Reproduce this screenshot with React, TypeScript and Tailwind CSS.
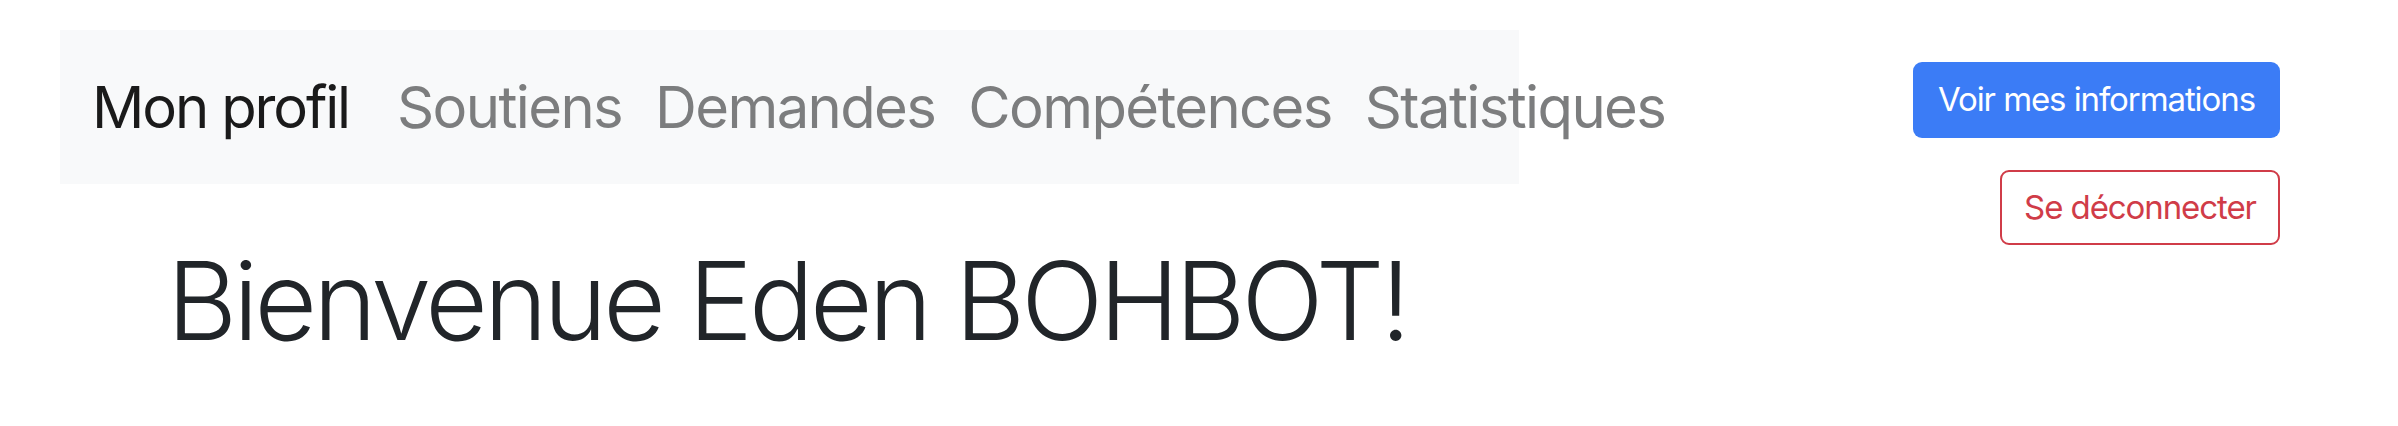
const links = ['Soutiens', 'Demandes', 'Compétences', 'Statistiques'];

export default function App() {
  return (
    <div className="flex w-[2398px] h-[426px] bg-white font-['Inter','Liberation_Sans',sans-serif] overflow-hidden">
      <div className="flex flex-col">
        <nav className="ml-[60px] mt-[30px] w-[1459px] h-[154px] bg-[#f8f9fa] flex items-center pl-[32px] whitespace-nowrap">
          <a className="text-[58px] leading-none tracking-[-0.037em] text-[#1a1a1a] mr-[48px]">Mon profil</a>
          <div className="flex gap-[33px]">
            {links.map((l) => (
              <a key={l} className="text-[58px] leading-none tracking-[-0.028em] text-[#7c7d7e]">
                {l}
              </a>
            ))}
          </div>
        </nav>
        <h1 className="ml-[167px] mt-[63px] text-[108px] leading-none font-light tracking-[-0.036em] text-[#212529] whitespace-nowrap">
          Bienvenue Eden BOHBOT!
        </h1>
      </div>
      <div className="ml-auto mr-[118px] mt-[62px] flex flex-col items-end gap-[32px]">
        <button className="w-[367px] h-[76px] rounded-[9px] bg-[#3b7cf6] text-white text-[33px] tracking-[-0.033em] flex items-center justify-center">
          Voir mes informations
        </button>
        <button className="w-[280px] h-[75px] rounded-[9px] border-2 border-[#d03c48] text-[#d03c48] text-[33px] tracking-[-0.033em] flex items-center justify-center">
          Se déconnecter
        </button>
      </div>
    </div>
  );
}
